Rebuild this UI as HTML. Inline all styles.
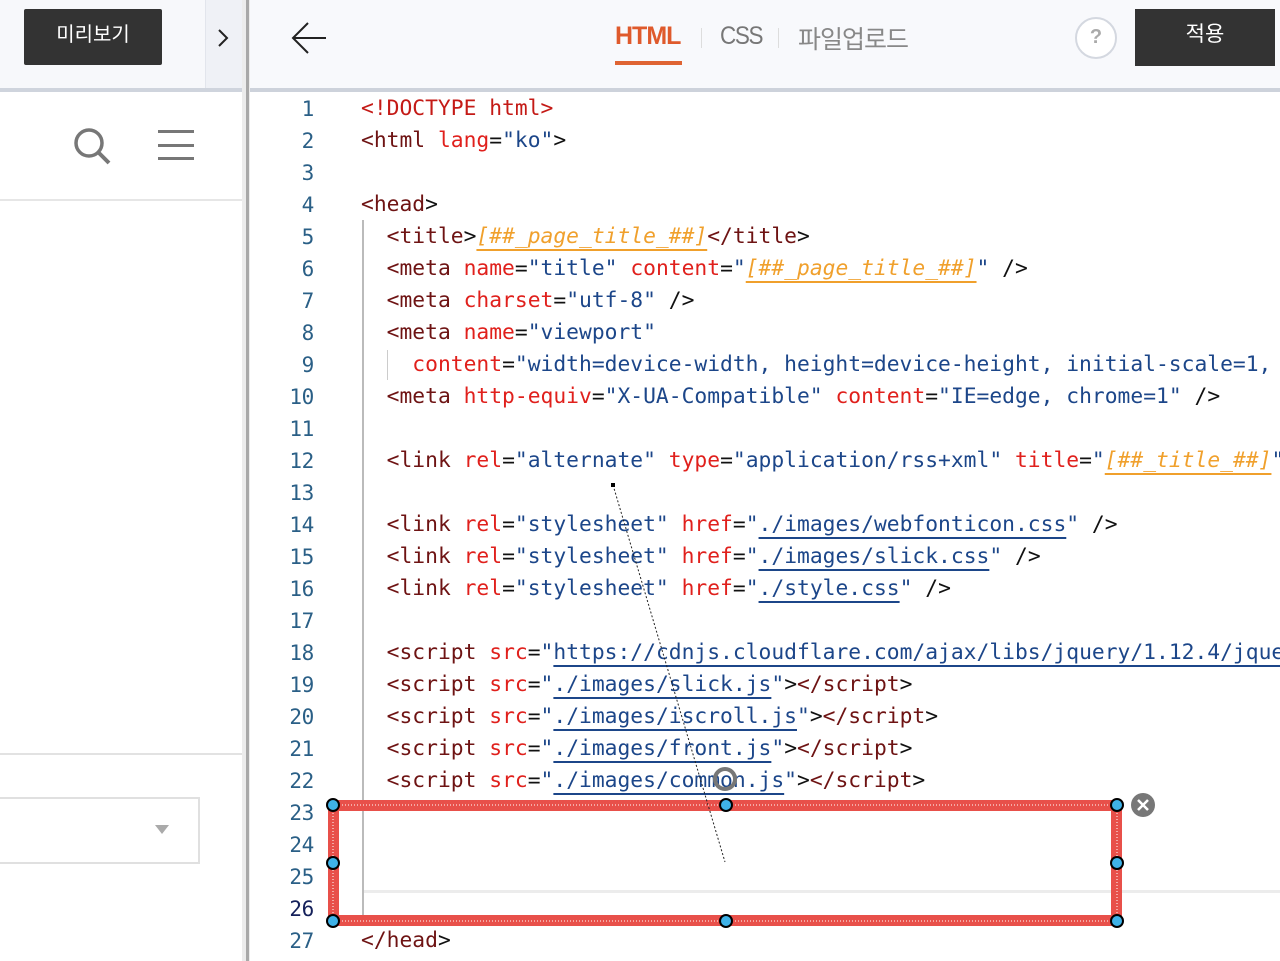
<!DOCTYPE html>
<html><head><meta charset="utf-8"><style>
*{margin:0;padding:0;box-sizing:border-box}
body{width:1280px;height:961px;overflow:hidden;background:#fff;position:relative;font-family:"Liberation Sans","Noto Sans CJK KR",sans-serif}
.abs{position:absolute}
.code{position:absolute;font-family:"DejaVu Sans Mono","Liberation Mono",monospace;font-size:21.3px;line-height:32px;white-space:pre;color:#111;letter-spacing:0}
.num{position:absolute;width:60px;left:254px;text-align:right;font-family:"DejaVu Sans Mono","Liberation Mono",monospace;font-size:21px;line-height:32px;color:#2a5f86;letter-spacing:-0.3px}
.t{color:#6e1313}.a{color:#e0201c}.s{color:#1c4689}.d{color:#c41a16}
.u{color:#1c4689;text-decoration:underline;text-underline-offset:6px}
.p{color:#f0a02c;font-style:italic;text-decoration:underline;text-underline-offset:6px}
.h{position:absolute;width:14px;height:14px;border-radius:50%;background:#3fb2e8;border:2px solid #000;margin:-7px 0 0 -7px}
.rb{position:absolute;background:#e8504a}
</style></head><body>
<div class="abs" style="left:0;top:0;width:242px;height:90px;background:#f7f8fb"></div>
<div class="abs" style="left:205px;top:0;width:37px;height:90px;background:#eff1f6;border-left:1px solid #e2e5ec"></div>
<div class="abs" style="left:24px;top:9px;width:138px;height:56px;background:#333;border-radius:2px;color:#fff;font-size:20px;text-align:center;line-height:52px">미리보기</div>
<svg class="abs" style="left:216px;top:28px" width="14" height="20"><path d="M3 2L11 10L3 18" fill="none" stroke="#222" stroke-width="2"/></svg>
<div class="abs" style="left:0;top:88px;width:242px;height:4px;background:#cfd4dd"></div>
<svg class="abs" style="left:70px;top:124px" width="44" height="44"><circle cx="19" cy="19" r="13" fill="none" stroke="#777" stroke-width="3.5"/><line x1="28" y1="28" x2="39" y2="39" stroke="#777" stroke-width="4"/></svg>
<div class="abs" style="left:158px;top:130px;width:36px;height:3px;background:#777"></div>
<div class="abs" style="left:158px;top:144px;width:36px;height:3px;background:#777"></div>
<div class="abs" style="left:158px;top:157px;width:36px;height:3px;background:#777"></div>
<div class="abs" style="left:0;top:199px;width:242px;height:2px;background:#e6e6e6"></div>
<div class="abs" style="left:0;top:753px;width:242px;height:2px;background:#e2e2e2"></div>
<div class="abs" style="left:-2px;top:797px;width:202px;height:67px;border:2px solid #e0e0e0"></div>
<div class="abs" style="left:155px;top:825px;width:0;height:0;border-left:7px solid transparent;border-right:7px solid transparent;border-top:9px solid #aaa"></div>
<div class="abs" style="left:242px;top:0;width:8px;height:961px;background:#ececec"></div>
<div class="abs" style="left:246px;top:0;width:3px;height:961px;background:#a8a8a8"></div>
<div class="abs" style="left:250px;top:0;width:1030px;height:89px;background:#f8f9fc"></div>
<div class="abs" style="left:250px;top:88px;width:1030px;height:4px;background:#cdd2db"></div>
<svg class="abs" style="left:290px;top:20px" width="40" height="36"><path d="M36 18H4M18 3L3 18L18 33" fill="none" stroke="#222" stroke-width="2"/></svg>
<div class="abs" style="left:615px;top:22px;font-size:25px;color:#df5a2c;font-weight:bold;letter-spacing:-1px">HTML</div>
<div class="abs" style="left:615px;top:61px;width:67px;height:4px;background:#df6433"></div>
<div class="abs" style="left:701px;top:28px;width:1px;height:20px;background:#ddd"></div>
<div class="abs" style="left:720px;top:22px;font-size:25px;color:#777;letter-spacing:-1.5px;transform:scaleX(0.9);transform-origin:left">CSS</div>
<div class="abs" style="left:778px;top:28px;width:1px;height:20px;background:#ddd"></div>
<div class="abs" style="left:798px;top:20px;font-size:25px;color:#888;letter-spacing:-1px">파일업로드</div>
<div class="abs" style="left:1075px;top:17px;width:42px;height:42px;border-radius:50%;border:2px solid #d4d8e0;background:#fff;color:#aaa;font-weight:bold;font-size:20px;text-align:center;line-height:37px">?</div>
<div class="abs" style="left:1135px;top:9px;width:140px;height:57px;background:#333;color:#fff;font-size:21px;text-align:center;line-height:52px">적용</div>
<div class="abs" style="left:362px;top:220px;width:2px;height:695px;background:#bbb"></div>
<div class="abs" style="left:387px;top:350px;width:1px;height:30px;background:#ccc"></div>
<div class="abs" style="left:364px;top:890px;width:916px;height:3px;background:#ececec"></div>
<div class="num" style="top:93px">1<br>2<br>3<br>4<br>5<br>6<br>7<br>8<br>9<br>10<br>11<br>12<br>13<br>14<br>15<br>16<br>17<br>18<br>19<br>20<br>21<br>22<br>23<br>24<br>25<br><span style="color:#14205a">26</span><br>27</div>
<div class="code" style="left:361px;top:93px"><span class="d">&lt;!DOCTYPE html&gt;</span>
<span class="t">&lt;html</span> <span class="a">lang</span>=<span class="s">"ko"</span>&gt;

<span class="t">&lt;head</span>&gt;
  <span class="t">&lt;title</span>&gt;<span class="p">[##_page_title_##]</span><span class="t">&lt;/title</span>&gt;
  <span class="t">&lt;meta</span> <span class="a">name</span>=<span class="s">"title"</span> <span class="a">content</span>=<span class="s">"</span><span class="p">[##_page_title_##]</span><span class="s">"</span> /&gt;
  <span class="t">&lt;meta</span> <span class="a">charset</span>=<span class="s">"utf-8"</span> /&gt;
  <span class="t">&lt;meta</span> <span class="a">name</span>=<span class="s">"viewport"</span>
    <span class="a">content</span>=<span class="s">"width=device-width, height=device-height, initial-scale=1,</span>
  <span class="t">&lt;meta</span> <span class="a">http-equiv</span>=<span class="s">"X-UA-Compatible"</span> <span class="a">content</span>=<span class="s">"IE=edge, chrome=1"</span> /&gt;

  <span class="t">&lt;link</span> <span class="a">rel</span>=<span class="s">"alternate"</span> <span class="a">type</span>=<span class="s">"application/rss+xml"</span> <span class="a">title</span>=<span class="s">"</span><span class="p">[##_title_##]</span><span class="s">"</span>

  <span class="t">&lt;link</span> <span class="a">rel</span>=<span class="s">"stylesheet"</span> <span class="a">href</span>=<span class="s">"</span><span class="u">./images/webfonticon.css</span><span class="s">"</span> /&gt;
  <span class="t">&lt;link</span> <span class="a">rel</span>=<span class="s">"stylesheet"</span> <span class="a">href</span>=<span class="s">"</span><span class="u">./images/slick.css</span><span class="s">"</span> /&gt;
  <span class="t">&lt;link</span> <span class="a">rel</span>=<span class="s">"stylesheet"</span> <span class="a">href</span>=<span class="s">"</span><span class="u">./style.css</span><span class="s">"</span> /&gt;

  <span class="t">&lt;script</span> <span class="a">src</span>=<span class="s">"</span><span class="u">https://cdnjs.cloudflare.com/ajax/libs/jquery/1.12.4/jque</span>
  <span class="t">&lt;script</span> <span class="a">src</span>=<span class="s">"</span><span class="u">./images/slick.js</span><span class="s">"</span>&gt;<span class="t">&lt;/script</span>&gt;
  <span class="t">&lt;script</span> <span class="a">src</span>=<span class="s">"</span><span class="u">./images/iscroll.js</span><span class="s">"</span>&gt;<span class="t">&lt;/script</span>&gt;
  <span class="t">&lt;script</span> <span class="a">src</span>=<span class="s">"</span><span class="u">./images/front.js</span><span class="s">"</span>&gt;<span class="t">&lt;/script</span>&gt;
  <span class="t">&lt;script</span> <span class="a">src</span>=<span class="s">"</span><span class="u">./images/common.js</span><span class="s">"</span>&gt;<span class="t">&lt;/script</span>&gt;




<span class="t">&lt;/head</span>&gt;</div>
<div class="rb" style="left:328px;top:800px;width:794px;height:11px"></div>
<div class="rb" style="left:328px;top:915px;width:794px;height:11px"></div>
<div class="rb" style="left:328px;top:800px;width:11px;height:126px"></div>
<div class="rb" style="left:1111px;top:800px;width:11px;height:126px"></div>
<svg class="abs" style="left:0;top:0" width="1280" height="961">
<line x1="613" y1="485" x2="725" y2="862" stroke="#222" stroke-width="1" stroke-dasharray="2,2"/>
<rect x="611" y="483" width="4" height="4" fill="#000"/>
<circle cx="725" cy="779" r="10" fill="none" stroke="#777" stroke-width="4"/>
<rect x="333" y="805" width="784" height="116" fill="none" stroke="#fff" stroke-width="1" stroke-dasharray="1,2"/>
<circle cx="1143" cy="805" r="12" fill="#777"/>
<path d="M1138 800L1148 810M1148 800L1138 810" stroke="#fff" stroke-width="2.5"/>
</svg>
<div class="h" style="left:333px;top:805px"></div><div class="h" style="left:726px;top:805px"></div><div class="h" style="left:1117px;top:805px"></div>
<div class="h" style="left:333px;top:863px"></div><div class="h" style="left:1117px;top:863px"></div>
<div class="h" style="left:333px;top:921px"></div><div class="h" style="left:726px;top:921px"></div><div class="h" style="left:1117px;top:921px"></div>
</body></html>
